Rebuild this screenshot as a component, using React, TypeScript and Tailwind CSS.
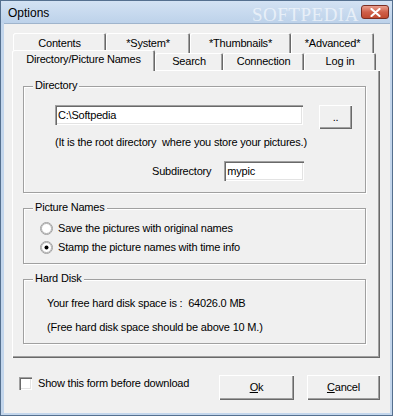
import React from "react";

const raised =
  "shadow-[inset_1px_1px_0_#ffffff,inset_-1px_-1px_0_#696969,inset_-2px_-2px_0_#a0a0a0]";
const sunken =
  "shadow-[inset_1px_1px_0_#a0a0a0,inset_2px_2px_0_#696969,inset_-1px_-1px_0_#ffffff,inset_-2px_-2px_0_#e3e3e3]";
const etched = "border border-[#a0a0a0] shadow-[1px_1px_0_#ffffff,inset_1px_1px_0_#ffffff]";

function Tab({ label, w, h = "h-[20px]" }: { label: string; w: string; h?: string }) {
  return (
    <div
      className={`${w} ${h} shrink-0 flex items-center justify-center rounded-t-[2px] bg-[#f0f0f0] shadow-[inset_1px_1px_0_#ffffff,inset_-1px_0_0_#696969,inset_-2px_0_0_#a0a0a0]`}
    >
      <span className="leading-[13px]">{label}</span>
    </div>
  );
}

function GroupBox({
  label,
  className,
  children,
}: {
  label: string;
  className: string;
  children?: React.ReactNode;
}) {
  return (
    <div className={`relative ${etched} ${className}`}>
      <span className="absolute left-[9px] top-[-8px] bg-[#f0f0f0] px-[2px] leading-[13px]">{label}</span>
      {children}
    </div>
  );
}

function Radio({ checked }: { checked?: boolean }) {
  return (
    <div className="w-[13px] h-[13px] shrink-0 relative">
      <svg width="13" height="13" viewBox="0 0 13 13">
        <circle cx="6.5" cy="6.5" r="6" fill="#ffffff" stroke="#a0a0a0" />
        <circle cx="6.5" cy="6.5" r="5" fill="none" stroke="#696969" strokeOpacity="0.5" />
        {checked && <circle cx="6.5" cy="6.5" r="2" fill="#000000" />}
      </svg>
    </div>
  );
}

export default function App() {
  return (
    <div
      className="w-[393px] h-[416px] overflow-hidden bg-[#c3d6ec] border border-[#55708f] text-black text-[11px] tracking-[-0.2px] relative flex flex-col"
      style={{ fontFamily: '"Liberation Sans", Arial, sans-serif' }}
    >
      {/* Title bar */}
      <div className="h-[22px] shrink-0 relative bg-gradient-to-b from-[#d3e2f3] to-[#bdd2ea] flex items-center">
        <span className="ml-[7px] mt-[2px] text-[12px] leading-[14px] tracking-normal text-black">Options</span>
        <div className="absolute left-[360px] top-[4px] w-[28px] h-[14px] rounded-[3px] border border-[#7b2e23] bg-gradient-to-b from-[#e9a08f] via-[#d0604a] to-[#c04a30] flex items-center justify-center">
          <svg width="11" height="9" viewBox="0 0 11 9">
            <path d="M1.5 1 L9.5 8 M9.5 1 L1.5 8" stroke="#ffffff" strokeWidth="2.2" strokeLinecap="round" />
          </svg>
        </div>
        <span
          className="absolute left-[251px] top-[4px] text-[19px] leading-[20px] tracking-[0.5px] text-white/60 pointer-events-none"
          style={{ fontFamily: '"Liberation Serif", serif' }}
        >
          SOFTPEDIA
        </span>
      </div>

      {/* Client area */}
      <div className="ml-[3px] mr-[2px] mb-[2px] flex-1 bg-[#f0f0f0] border-t border-[#9fb4cc] relative">
        <span className="absolute left-[267px] top-[15px] text-[8px] leading-[9px] tracking-[0.3px] text-[#c4c4c4]">
          www.softpedia.com
        </span>

        {/* Tab row 1 */}
        <div className="flex pl-[9px] mt-[9px] relative">
          <Tab label="Contents" w="w-[93px]" />
          <Tab label="*System*" w="w-[84px]" />
          <Tab label="*Thumbnails*" w="w-[101px]" />
          <Tab label="*Advanced*" w="w-[83px]" />
        </div>

        {/* Tab row 2 */}
        <div className="flex items-end pl-[8px] h-[17px] relative z-10">
          <div className="w-[143px] h-[21px] mb-[-1px] shrink-0 flex items-start justify-center pt-[3px] rounded-t-[2px] bg-[#f0f0f0] shadow-[inset_1px_1px_0_#ffffff,inset_-1px_0_0_#696969,inset_-2px_0_0_#a0a0a0]">
            <span className="leading-[13px]">Directory/Picture Names</span>
          </div>
          <Tab label="Search" w="w-[68px]" h="h-[17px]" />
          <Tab label="Connection" w="w-[81px]" h="h-[17px]" />
          <Tab label="Log in" w="w-[72px]" h="h-[17px]" />
        </div>

        {/* Panel */}
        <div className={`ml-[8px] w-[368px] h-[288px] bg-[#f0f0f0] ${raised} flex flex-col pl-[11px] pt-[16px]`}>
          <GroupBox label="Directory" className="w-[343px] h-[107px] shrink-0">
            <div className="flex flex-col pl-[31px] pt-[18px]">
              <div className="flex items-start">
                <div className={`w-[248px] h-[20px] bg-white ${sunken} flex items-center pl-[3px]`}>
                  <span className="leading-[13px]">C:\Softpedia</span>
                </div>
                <div className={`ml-[16px] w-[33px] h-[24px] bg-[#f0f0f0] ${raised} flex items-center justify-center`}>
                  <span className="leading-[13px]">..</span>
                </div>
              </div>
              <div className="mt-[7px] leading-[13px] whitespace-pre">
                (It is the root directory  where you store your pictures.)
              </div>
              <div className="flex items-center mt-[12px]">
                <span className="ml-[97px] leading-[13px]">Subdirectory</span>
                <div className={`ml-[13px] w-[80px] h-[20px] bg-white ${sunken} flex items-center pl-[3px]`}>
                  <span className="leading-[13px]">mypic</span>
                </div>
              </div>
            </div>
          </GroupBox>

          <GroupBox label="Picture Names" className="w-[343px] h-[56px] shrink-0 mt-[15px]">
            <div className="flex flex-col pl-[16px] pt-[13px] gap-[6px]">
              <div className="flex items-center">
                <Radio />
                <span className="ml-[5px] leading-[13px]">Save the pictures with original names</span>
              </div>
              <div className="flex items-center">
                <Radio checked />
                <span className="ml-[5px] leading-[13px]">Stamp the picture names with time info</span>
              </div>
            </div>
          </GroupBox>

          <GroupBox label="Hard Disk" className="w-[343px] h-[65px] shrink-0 mt-[15px]">
            <div className="flex flex-col pl-[23px] pt-[17px]">
              <div className="leading-[13px] whitespace-pre">Your free hard disk space is :  64026.0 MB</div>
              <div className="leading-[13px] mt-[11px]">(Free hard disk space should be above 10 M.)</div>
            </div>
          </GroupBox>
        </div>

        {/* Bottom row */}
        <div className="flex items-start mt-[17px]">
          <div className="flex items-center ml-[15px] mt-[2px]">
            <div className={`w-[13px] h-[13px] bg-white ${sunken}`} />
            <span className="ml-[6px] leading-[13px]">Show this form before download</span>
          </div>
          <div className="ml-auto mr-[10px] flex gap-[13px]">
            <div className={`w-[75px] h-[25px] bg-[#f0f0f0] ${raised} flex items-center justify-center`}>
              <span className="leading-[13px]">
                <span className="underline">O</span>k
              </span>
            </div>
            <div className={`w-[73px] h-[25px] bg-[#f0f0f0] ${raised} flex items-center justify-center`}>
              <span className="leading-[13px]">
                <span className="underline">C</span>ancel
              </span>
            </div>
          </div>
        </div>
      </div>
    </div>
  );
}
